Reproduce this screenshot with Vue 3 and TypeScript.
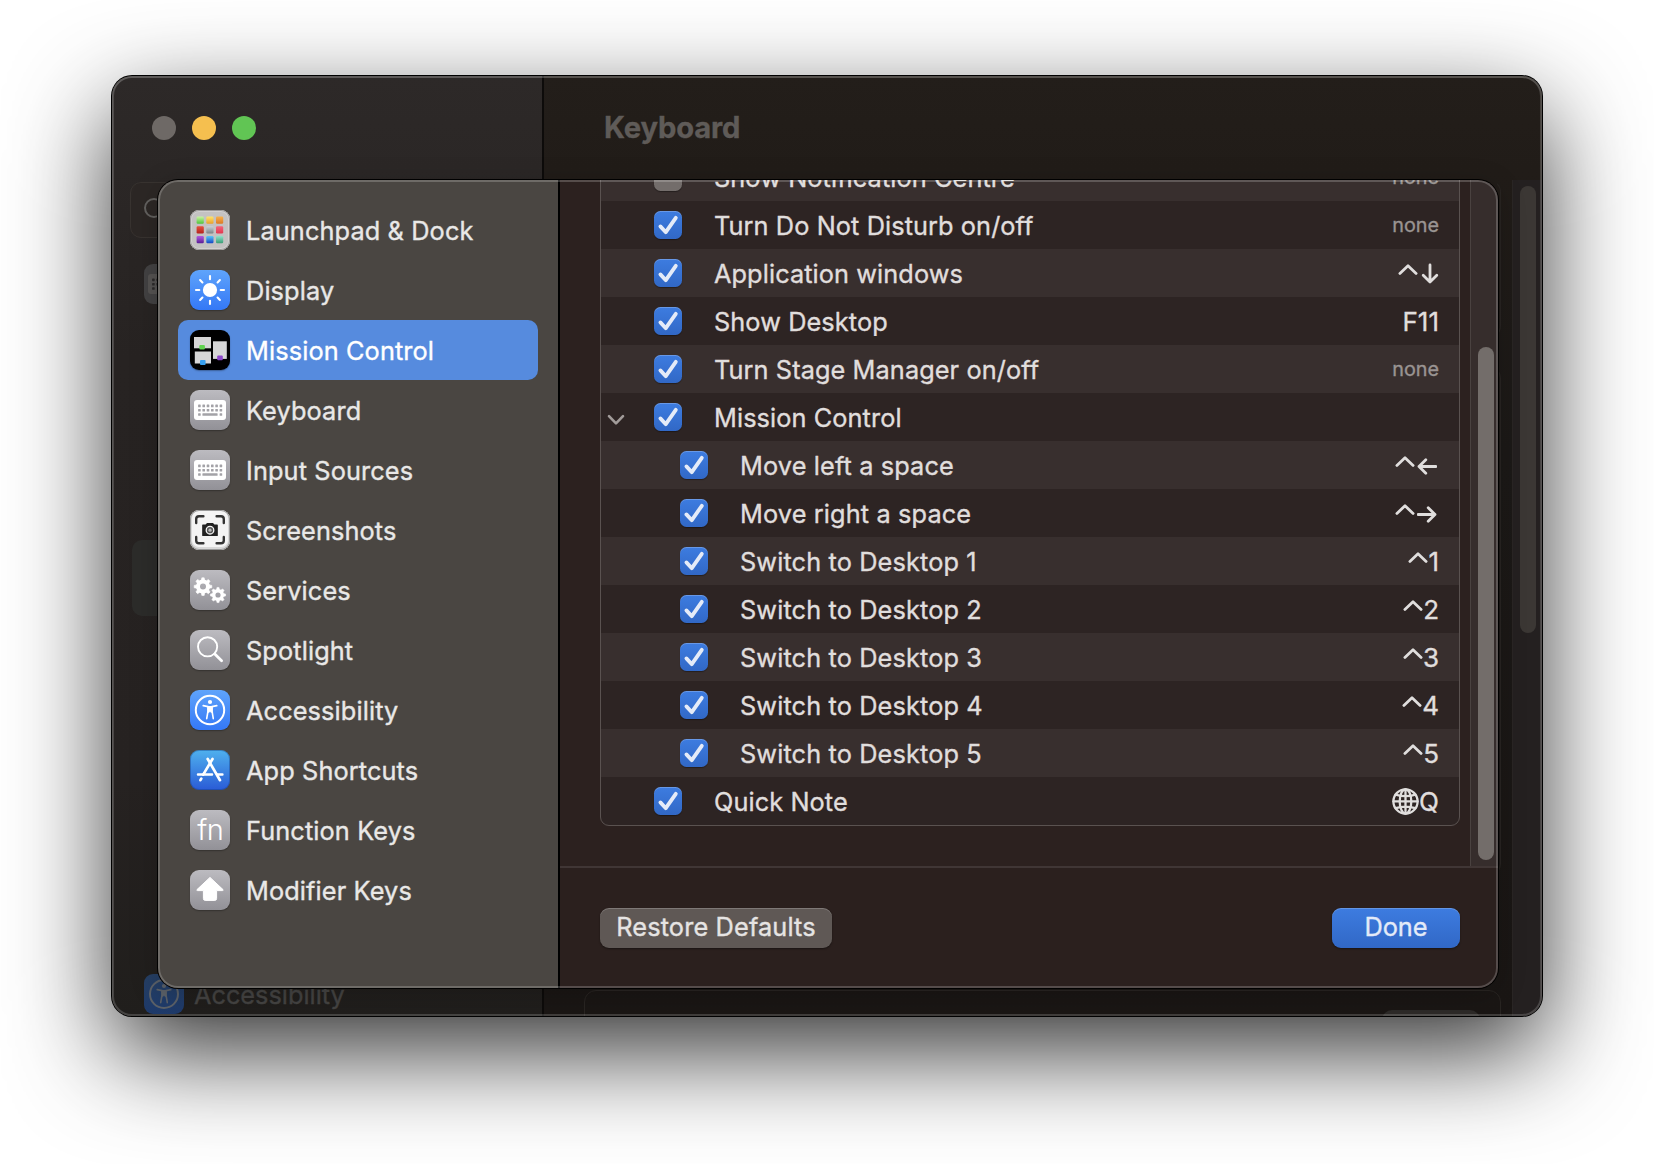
<script setup lang="ts">
interface NavItem { id: string; label: string; tone: string }
interface Shortcut {
  label: string
  keys?: string
  arrow?: 'down' | 'left' | 'right'
  ctrl?: boolean
  globe?: boolean
  none?: boolean
  off?: boolean
  open?: boolean
  child?: boolean
}

const nav: NavItem[] = [
  { id: 'launchpad', label: 'Launchpad & Dock', tone: 'silver' },
  { id: 'display', label: 'Display', tone: 'blue' },
  { id: 'mission', label: 'Mission Control', tone: 'black' },
  { id: 'keyboard', label: 'Keyboard', tone: 'gray' },
  { id: 'keyboard', label: 'Input Sources', tone: 'gray' },
  { id: 'screenshots', label: 'Screenshots', tone: 'white' },
  { id: 'services', label: 'Services', tone: 'gray' },
  { id: 'spotlight', label: 'Spotlight', tone: 'gray' },
  { id: 'accessibility', label: 'Accessibility', tone: 'blue' },
  { id: 'appstore', label: 'App Shortcuts', tone: 'store' },
  { id: 'fn', label: 'Function Keys', tone: 'gray' },
  { id: 'modifier', label: 'Modifier Keys', tone: 'gray' },
]
const selected = 'Mission Control'

const shortcuts: Shortcut[] = [
  { label: 'Show Notification Centre', none: true, off: true },
  { label: 'Turn Do Not Disturb on/off', none: true },
  { label: 'Application windows', ctrl: true, arrow: 'down' },
  { label: 'Show Desktop', keys: 'F11' },
  { label: 'Turn Stage Manager on/off', none: true },
  { label: 'Mission Control', open: true },
  { label: 'Move left a space', ctrl: true, arrow: 'left', child: true },
  { label: 'Move right a space', ctrl: true, arrow: 'right', child: true },
  { label: 'Switch to Desktop 1', ctrl: true, keys: '1', child: true },
  { label: 'Switch to Desktop 2', ctrl: true, keys: '2', child: true },
  { label: 'Switch to Desktop 3', ctrl: true, keys: '3', child: true },
  { label: 'Switch to Desktop 4', ctrl: true, keys: '4', child: true },
  { label: 'Switch to Desktop 5', ctrl: true, keys: '5', child: true },
  { label: 'Quick Note', globe: true, keys: 'Q' },
]

const arrows: Record<string, string> = {
  down: 'M10 6V22.5M3.2 16.2L10 23L16.8 16.2',
  left: 'M19 15.5H2M8.8 8.7L2 15.5L8.8 22.3',
  right: 'M1 15.5H18M11.2 8.7L18 15.5L11.2 22.3',
}

const tiles = [
  ['#c8f5a0', '#4fc43a'], ['#ffe56a', '#e8a02c'], ['#f7b04c', '#dc7a25'],
  ['#e8503c', '#b3231c'], ['#c9d0d4', '#7c8386'], ['#f4637a', '#e2384f'],
  ['#b45be0', '#5a1d96'], ['#58c8f8', '#1546c4'], ['#8fe3cb', '#3c9c74'],
]
const rays = [0, 45, 90, 135, 180, 225, 270, 315]
const teeth = [0, 45, 90, 135, 180, 225, 270, 315]
const keyDots: number[][] = []
for (let r = 0; r < 2; r++) for (let c = 0; c < 6; c++) keyDots.push([8.1 + c * 4.3, 14.6 + r * 4.3])
keyDots.push([8.1, 23.2], [29.6, 23.2])
</script>

<template>
  <div class="desktop">
    <main class="window">
      <aside class="back-side">
        <div class="lights"><i class="close" /><i class="min" /><i class="max" /></div>
        <div class="search">
          <svg width="30" height="30" viewBox="0 0 30 30"><circle cx="12" cy="13" r="9" /><path d="M19 20L26 27" /></svg>
        </div>
        <div class="back-key">
          <svg width="40" height="40" viewBox="0 0 40 40">
            <rect x="4" y="10" width="32" height="20" rx="3" fill="#555352" />
            <rect v-for="(d, i) in keyDots" :key="i" :x="d[0]" :y="d[1]" width="2.6" height="2.6" rx=".6" fill="#2c2a2a" />
          </svg>
        </div>
        <div class="back-selected" />
        <div class="back-access">
          <svg width="40" height="40" viewBox="0 0 40 40">
            <circle cx="20" cy="20" r="14" fill="none" stroke="#5c6168" stroke-width="2" />
            <circle cx="20" cy="12" r="2.1" fill="#5c6168" />
            <path d="M13.2 15.6L18 16.6V21L16.7 28.6M26.8 15.6L22 16.6V21L23.3 28.6" fill="none" stroke="#5c6168" stroke-width="1.6" stroke-linecap="round" stroke-linejoin="round" />
            <path d="M17.3 15.9H22.7V20L22.4 22.8H20.9L20 21.6L19.1 22.8H17.6L17.3 20Z" fill="#5c6168" />
          </svg>
          <span>Accessibility</span>
        </div>
      </aside>
      <section class="back-main">
        <h1>Keyboard</h1>
        <div class="back-content">
          <div class="groups">
            <div class="group g1" />
            <div class="group g2" />
            <div class="group g3"><i /></div>
          </div>
          <div class="back-track"><i /></div>
        </div>
      </section>

      <div class="sheet">
        <nav class="nav">
          <div v-for="n in nav" :key="n.label" class="item" :class="{ active: n.label === selected }">
            <span class="icon" :class="n.tone">
              <svg width="40" height="40" viewBox="0 0 40 40" fill="none">
                <template v-if="n.id === 'launchpad'">
                  <defs>
                    <linearGradient v-for="(t, i) in tiles" :id="'t' + i" :key="i" x1="0" y1="0" x2="0" y2="1">
                      <stop offset="0" :stop-color="t[0]" /><stop offset="1" :stop-color="t[1]" />
                    </linearGradient>
                  </defs>
                  <rect v-for="(t, i) in tiles" :key="'r' + i" :x="6.6 + (i % 3) * 9.7" :y="6.6 + Math.floor(i / 3) * 9.7" width="7.2" height="7.2" rx="1.2" :fill="`url(#t${i})`" />
                </template>
                <template v-else-if="n.id === 'display'">
                  <circle cx="20" cy="20" r="7.1" fill="#fff" />
                  <path v-for="a in rays" :key="a" d="M20 6V9.3" stroke="#fff" stroke-width="2.1" stroke-linecap="round" :transform="`rotate(${a} 20 20)`" />
                </template>
                <template v-else-if="n.id === 'mission'">
                  <rect x="4" y="7" width="17" height="11.3" fill="#d6d6d6" />
                  <rect x="4.8" y="21.5" width="16.2" height="12" fill="#d6d6d6" />
                  <rect x="23" y="11.3" width="13.8" height="17.6" fill="#d6d6d6" />
                  <rect x="9.3" y="15" width="5.6" height="4.6" rx="1" fill="#62d350" />
                  <rect x="10" y="30" width="5.6" height="5" rx="1" fill="#38a1f0" />
                  <rect x="27.2" y="25.5" width="5.6" height="4.8" rx="1" fill="#8c47c9" />
                </template>
                <template v-else-if="n.id === 'keyboard'">
                  <rect x="4" y="10" width="32" height="20" rx="3" fill="#fff" />
                  <rect v-for="(d, i) in keyDots" :key="i" :x="d[0]" :y="d[1]" width="2.6" height="2.6" rx=".5" fill="#a3a2a7" />
                  <rect x="12.4" y="23.2" width="15.2" height="2.6" rx=".6" fill="#a3a2a7" />
                </template>
                <template v-else-if="n.id === 'screenshots'">
                  <path d="M6.2 13V9Q6.2 6.2 9 6.2H13.4M26.6 6.2H31Q33.8 6.2 33.8 9V13M33.8 27V30.4Q33.8 33.3 31 33.3H26.6M13.4 33.3H9Q6.2 33.3 6.2 30.4V27" stroke="#333" stroke-width="2.4" stroke-linecap="round" />
                  <path d="M12.8 15H16L17.2 13.7H22.8L24 15H27.2V25.4H12.8Z" fill="#222" stroke="#222" stroke-width="1.2" stroke-linejoin="round" />
                  <circle cx="20" cy="20.2" r="3.8" fill="#555" stroke="#f4f4f4" stroke-width="1.3" />
                  <circle cx="20" cy="20.2" r="1.6" fill="#bbb" />
                </template>
                <template v-else-if="n.id === 'services'">
                  <g v-for="g in [{ x: 13, y: 16.6, s: 1 }, { x: 28, y: 25, s: 0.86 }]" :key="g.x" :transform="`translate(${g.x} ${g.y}) scale(${g.s})`">
                    <circle r="5" stroke="#fff" stroke-width="4" />
                    <path v-for="a in teeth" :key="a" d="M-1.7 -6L-1.2 -8.8H1.2L1.7 -6Z" fill="#fff" stroke="#fff" stroke-width=".6" stroke-linejoin="round" :transform="`rotate(${a})`" />
                  </g>
                </template>
                <template v-else-if="n.id === 'spotlight'">
                  <circle cx="17.6" cy="16.8" r="9.6" stroke="#fff" stroke-width="1.9" />
                  <path d="M24.8 24L31.6 30.8" stroke="#fff" stroke-width="2.8" stroke-linecap="round" />
                </template>
                <template v-else-if="n.id === 'accessibility'">
                  <circle cx="20" cy="20" r="14.2" stroke="#fff" stroke-width="2" />
                  <circle cx="20" cy="12" r="2.1" fill="#fff" />
                  <path d="M13.2 15.6L18 16.6V21L16.7 28.6M26.8 15.6L22 16.6V21L23.3 28.6" stroke="#fff" stroke-width="1.6" stroke-linecap="round" stroke-linejoin="round" />
                  <path d="M17.3 15.9H22.7V20L22.4 22.8H20.9L20 21.6L19.1 22.8H17.6L17.3 20Z" fill="#fff" />
                </template>
                <template v-else-if="n.id === 'appstore'">
                  <path d="M22.5 9L13.2 24.6M11.3 28.6L10.4 30.2" stroke="#fff" stroke-width="2.7" stroke-linecap="round" />
                  <path d="M17.7 9L30 30.2" stroke="#fff" stroke-width="2.7" stroke-linecap="round" />
                  <path d="M8 24.6H22M27.4 24.6H32.4" stroke="#fff" stroke-width="2.5" stroke-linecap="round" />
                </template>
                <text v-else-if="n.id === 'fn'" x="20.2" y="29.6" text-anchor="middle" class="fn">fn</text>
                <path v-else d="M20 7.4L33 19.6Q33.6 20.6 32.4 20.6H26.6V28.6Q26.6 30.4 24.8 30.4H15.2Q13.4 30.4 13.4 28.6V20.6H7.6Q6.4 20.6 7 19.6Z" fill="#fff" stroke="#fff" stroke-width="1" stroke-linejoin="round" />
              </svg>
            </span>
            <span class="label">{{ n.label }}</span>
          </div>
        </nav>

        <section class="pane">
          <div class="scroll">
            <div class="viewport">
              <div class="table">
                <div v-for="s in shortcuts" :key="s.label" class="row" :class="{ child: s.child }">
                  <span class="disclosure">
                    <svg v-if="s.open" width="18" height="12" viewBox="0 0 18 12"><path d="M2 2.2L9 9.4L16 2.2" /></svg>
                  </span>
                  <span class="check" :class="{ off: s.off }">
                    <svg v-if="!s.off" width="28" height="28" viewBox="0 0 28 28"><path d="M6.4 15.4L11.8 21.2L21.8 6.8" /></svg>
                  </span>
                  <span class="name">{{ s.label }}</span>
                  <span v-if="s.none" class="none">none</span>
                  <span v-else class="keys">
                    <svg v-if="s.ctrl" width="20" height="28" viewBox="0 0 20 28"><path d="M1.9 14.4L10 6.8L18.1 14.4" /></svg>
                    <svg v-if="s.globe" class="globe" width="27" height="28" viewBox="0 0 27 28">
                      <circle cx="13.5" cy="14.4" r="12.1" /><ellipse cx="13.5" cy="14.4" rx="5.8" ry="12.1" />
                      <path d="M13.5 2.3V26.5M1.4 14.4H25.6M3.6 7.6Q13.5 10.8 23.4 7.6M3.6 21.2Q13.5 18 23.4 21.2" />
                    </svg>
                    <svg v-if="s.arrow" class="arrow" :class="s.arrow" width="20" height="28" viewBox="0 0 20 28"><path :d="arrows[s.arrow]" /></svg>
                    <b v-if="s.keys">{{ s.keys }}</b>
                  </span>
                </div>
              </div>
            </div>
            <div class="track"><i /></div>
          </div>
          <footer>
            <button class="plain">Restore Defaults</button>
            <button class="primary">Done</button>
          </footer>
        </section>
      </div>
    </main>
  </div>
</template>

<style>
body { background: #fff; }
</style>

<style scoped>
.desktop {
  box-sizing: border-box; width: 1654px; height: 1164px; padding: 76px 112px 0; overflow: hidden;
  background: #fff; font-family: Inter, "Liberation Sans", sans-serif; font-size: 25.3px;
  -webkit-text-stroke: .35px currentColor;
}
.desktop * { box-sizing: border-box; }
svg { display: block; flex: none; }
.window {
  position: relative; display: flex; width: 1430px; height: 940px; border-radius: 20px;
  box-shadow: 0 0 0 1px #000, 0 36px 100px rgba(0, 0, 0, .8); background: #1e1a17;
}
.window::after, .sheet::after {
  content: ""; position: absolute; inset: 0; border-radius: 20px; pointer-events: none;
}
.window::after { box-shadow: inset 0 0 0 2px rgba(255, 255, 255, .17), inset 0 1px 0 1px rgba(255, 255, 255, .08); }
.sheet::after { box-shadow: inset 0 0 0 2px rgba(255, 255, 255, .2); }
.back-side {
  width: 432px; border-right: 2px solid #0d0b0a; border-radius: 20px 0 0 20px; overflow: hidden;
  background: linear-gradient(#2d2928, #272322 30%, #262221 75%, #201e1c);
}
.lights { display: flex; gap: 16px; padding: 40px 0 0 40px; height: 106px; }
.lights i { width: 24px; height: 24px; border-radius: 50%; }
.close { background: #6e6966; }
.min { background: #f5bf4f; }
.max { background: #61c554; }
.search {
  margin-left: 18px; width: 380px; height: 56px; border: 1px solid #383330; border-radius: 11px;
  background: #2c2725; padding: 12px 0 0 11px;
}
.search svg { fill: none; stroke: #62605e; stroke-width: 2; }
.back-key {
  margin: 26px 0 0 32px; width: 40px; height: 40px; border-radius: 9px; background: #434243;
}
.back-selected { margin: 236px 0 0 20px; width: 390px; height: 76px; border-radius: 10px; background: #2c2c2a; }
.back-access { display: flex; gap: 10px; align-items: center; margin: 358px 0 0 32px; height: 40px; color: #454443; }
.back-access svg { border-radius: 9px; background: linear-gradient(#263f63, #1e3a6b); }
.back-main {
  flex: 1; display: flex; flex-direction: column; border-radius: 0 20px 20px 0; overflow: hidden;
  background: linear-gradient(#231e1a, #211c18 10%, #1c1917 40%, #1a1614);
}
h1 { flex: none; margin: 0; height: 104px; padding: 34px 0 0 60px; font-size: 29.2px; line-height: 36px; font-weight: 700; letter-spacing: -.15px; color: #5f5b58; }
.back-content { flex: 1; min-height: 0; display: flex; overflow: hidden; }
.groups { flex: 1; padding-left: 40px; }
.group { width: 917px; border: 1px solid #292522; border-radius: 12px; }
.g1 { height: 158px; border-top-color: transparent; }
.g2 { margin-top: 28px; height: 510px; }
.g3 { margin-top: 114px; height: 80px; padding: 19px 20px; display: flex; justify-content: flex-end; }
.g3 i { width: 98px; height: 40px; border-radius: 10px; background: #2d2a28; }
.back-track { width: 30px; background: #242020; border-left: 1px solid #2a2625; padding: 6px 0 0 7px; }
.back-track i { display: block; width: 16px; height: 447px; border-radius: 8px; background: #3b3734; }

.sheet {
  position: absolute; left: 46px; top: 104px; display: flex; width: 1340px; height: 808px;
  border-radius: 20px; overflow: hidden; background: #2c211f;
}
.window > .sheet { box-shadow: 0 0 0 1px #000, 0 6px 30px rgba(0, 0, 0, .2); }
.nav { width: 402px; padding: 20px 20px 0; border-right: 2px solid #000; background: #4a4642; }
.item { display: flex; align-items: center; gap: 16px; height: 60px; padding-left: 12px; border-radius: 10px; color: #e9e8e7; }
.item.active { background: #568bde; color: #fff; }
.label { position: relative; top: .5px; white-space: nowrap; letter-spacing: .12px; }
.icon { width: 40px; height: 40px; border-radius: 9px; box-shadow: 0 1px 1.5px rgba(0, 0, 0, .3); overflow: hidden; }
.gray { background: linear-gradient(#bcbbc0, #929197); }
.blue { background: linear-gradient(#5fa4fb, #3478f6); }
.silver { background: #c4c2c2; box-shadow: inset 0 0 0 1px #9c9a99, inset 0 0 0 2px #d2d0d0; }
.black { background: #000; }
.white { background: #f4f4f4; box-shadow: inset 0 0 0 1px #999, inset 0 -1px 0 2px #d8d8d8; }
.store { background: linear-gradient(#4fb1ee, #2a5bd6); box-shadow: inset 0 0 0 1px rgba(20, 60, 130, .4); }
.fn { font: 300 29px Inter, sans-serif; fill: #fff; letter-spacing: -.5px; -webkit-text-stroke: .2px #fff; }

.pane { flex: 1; display: flex; flex-direction: column; }
.scroll { display: flex; height: 686px; overflow: hidden; }
.viewport { flex: 1; padding-left: 40px; }
.table {
  width: 860px; margin-top: -27px; border: 1px solid #5a5250; border-radius: 9px; overflow: hidden;
  background: #2d2423;
}
.row { display: flex; align-items: center; height: 48px; padding-right: 20px; color: #e0dedd; }
.row:nth-child(odd) { background: #382f2e; }
.row:first-child { margin-top: -1px; }
.disclosure { width: 53px; padding-left: 6px; }
.child .disclosure { width: 79px; }
.disclosure svg { position: relative; top: 2.5px; fill: none; stroke: #a29c9a; stroke-width: 2.6; stroke-linecap: round; stroke-linejoin: round; }
.check {
  width: 28px; height: 28px; border-radius: 6.5px; background: linear-gradient(#3d7ce0, #3168c6);
  box-shadow: inset 0 1px 0 rgba(255, 255, 255, .22), 0 1px 1px rgba(0, 0, 0, .35);
}
.check.off { background: #736d6b; }
.check path { fill: none; stroke: #e4ebf8; stroke-width: 3.8; stroke-linecap: round; stroke-linejoin: round; }
.name { flex: 1; margin-left: 32px; white-space: nowrap; letter-spacing: .09px; position: relative; top: .5px; }
.child .name { letter-spacing: .13px; }
.none { font-size: 19.8px; color: #9a9492; }
.keys { display: flex; align-items: center; }
.keys b { font-weight: 400; margin-left: 0; position: relative; top: .5px; font-size: 26px; }
.keys svg { fill: none; stroke: #e0dedd; stroke-width: 2.8; stroke-linecap: round; stroke-linejoin: round; }
.arrow { margin-left: 2px; margin-right: 2px; }
.arrow.down { margin-left: 2px; margin-right: -1px; }
.keys .globe { stroke-width: 2.3; }
.track { width: 28px; border-left: 1px solid #4a4240; background: #362d2c; padding: 167px 0 0 7px; }
.track i { display: block; width: 16px; height: 513px; border-radius: 8px; background: #736d6a; }
footer { flex: 1; display: flex; justify-content: space-between; padding: 40px 38px 0 40px; border-top: 2px solid #403635; background: #2b201e; }
button {
  height: 40px; padding: 0 0 4px; border: 0; border-radius: 9px; font: inherit; color: #e6e4e3;
  box-shadow: inset 0 1px 0 rgba(255, 255, 255, .2), 0 1px 2px rgba(0, 0, 0, .4);
}
.plain { width: 232px; background: #5f5855; letter-spacing: .15px; }
.primary { width: 128px; background: linear-gradient(#3d7ce0, #3168c6); color: #e4ebf8; }
</style>
